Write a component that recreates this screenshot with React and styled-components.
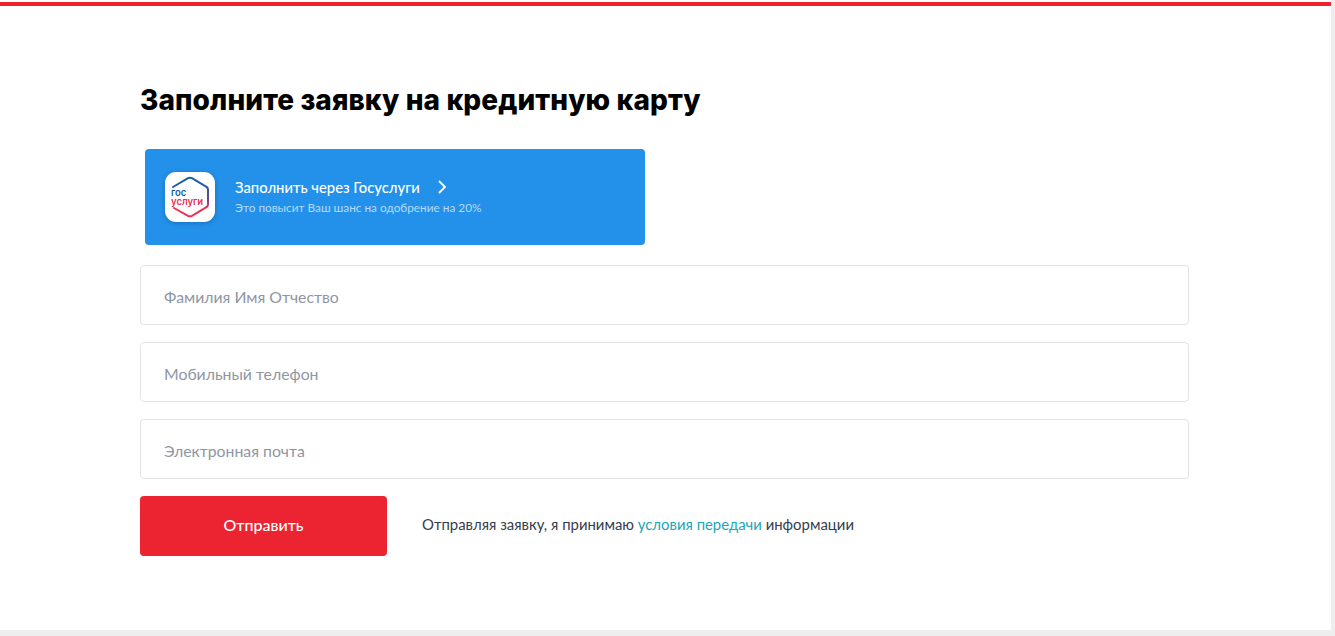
import React from "react";
import styled, { createGlobalStyle } from "styled-components";

const Global = createGlobalStyle`
  html, body { margin: 0; padding: 0; background: #eeeeee; }
  body { font-family: "Lato", "Noto Sans", sans-serif; overflow: hidden; }
`;

const Page = styled.div`
  width: 1331px;
  height: 630px;
  box-sizing: border-box;
  padding-top: 2px;
  background: #fff;
`;
const TopBar = styled.div`
  height: 4px;
  background: #ec2330;
`;
const Content = styled.main`
  padding: 76px 142px 0 140px;
`;
const Title = styled.h1`
  margin: 0;
  font-family: "Inter", sans-serif;
  font-size: 28px;
  line-height: 36px;
  font-weight: 800;
  letter-spacing: 0.1px;
  color: #000;
`;
const GosButton = styled.a`
  display: flex;
  align-items: center;
  gap: 20px;
  width: 500px;
  height: 96px;
  box-sizing: border-box;
  margin: 31px 0 20px 5px;
  padding: 0 20px;
  border-radius: 4px;
  background: #2391ea;
`;
const GosIcon = styled.div`
  width: 50px;
  height: 50px;
  flex: none;
  border-radius: 11px;
  background: #fff;
  box-shadow: 0 1px 5px rgba(0, 50, 110, 0.35);
  overflow: hidden;
`;
const GosText = styled.div`
  display: flex;
  flex-direction: column;
  gap: 4px;
  padding-bottom: 1px;
`;
const GosTitleRow = styled.div`
  display: flex;
  align-items: center;
  gap: 17px;
  font-size: 14.8px;
  line-height: 18px;
  font-weight: 500;
  color: #fff;
`;
const GosHint = styled.div`
  font-size: 11.8px;
  line-height: 15px;
  color: #b5dbf9;
`;
const Fields = styled.div`
  display: flex;
  flex-direction: column;
  gap: 17px;
`;
const Field = styled.input`
  display: block;
  width: 100%;
  height: 60px;
  box-sizing: border-box;
  padding: 2px 23px 0;
  border: 1px solid #e2e4e8;
  border-radius: 4px;
  background: #fff;
  font-family: inherit;
  font-size: 15.8px;
  outline: none;
  &::placeholder {
    color: #8f96a3;
    opacity: 1;
  }
`;
const Footer = styled.div`
  display: flex;
  align-items: center;
  gap: 35px;
  margin-top: 17px;
`;
const Submit = styled.button`
  width: 247px;
  height: 60px;
  padding: 0 0 3px;
  border: 0;
  border-radius: 4px;
  background: #ec2330;
  color: #fff;
  font-family: inherit;
  font-size: 16px;
  font-weight: 500;
`;
const Terms = styled.p`
  margin: 0 0 4px;
  font-size: 14.9px;
  line-height: 20px;
  color: #353d4d;
`;
const TermsLink = styled.a`
  color: #1ba6b8;
`;

const Chevron = () => (
  <svg width="10" height="14" viewBox="0 0 10 14" fill="none">
    <path d="M2 1l6 6-6 6" stroke="#fff" strokeWidth="1.8" />
  </svg>
);

const GosLogo = () => (
  <svg width="50" height="50" viewBox="0 0 50 50" fill="none">
    <defs>
      <linearGradient id="gosGrad" x1="0" y1="0" x2="0" y2="1">
        <stop offset="0" stopColor="#0d62ad" />
        <stop offset="0.55" stopColor="#5a4a96" />
        <stop offset="0.8" stopColor="#ee2f53" />
        <stop offset="1" stopColor="#ee2f53" />
      </linearGradient>
    </defs>
    <path
      d="M8 15L23 6.2q2-1 4 0l14 8.3q2 1 2 3v15q0 2-2 3l-14 8.3q-2 1-4 0L9 36"
      stroke="url(#gosGrad)"
      strokeWidth="2"
      strokeLinecap="round"
    />
    <text x="6" y="24" fontFamily="Inter, sans-serif" fontWeight="600" fontSize="9.5" fill="#0d62ad">гос</text>
    <text x="6" y="33" fontFamily="Inter, sans-serif" fontWeight="600" fontSize="9.5" fill="#ee2f53">услуги</text>
  </svg>
);

export default function App() {
  return (
    <>
      <Global />
      <Page>
        <TopBar />
        <Content>
          <Title>Заполните заявку на кредитную карту</Title>
          <GosButton>
            <GosIcon><GosLogo /></GosIcon>
            <GosText>
              <GosTitleRow>Заполнить через Госуслуги <Chevron /></GosTitleRow>
              <GosHint>Это повысит Ваш шанс на одобрение на 20%</GosHint>
            </GosText>
          </GosButton>
          <Fields>
            <Field placeholder="Фамилия Имя Отчество" />
            <Field placeholder="Мобильный телефон" />
            <Field placeholder="Электронная почта" />
          </Fields>
          <Footer>
            <Submit>Отправить</Submit>
            <Terms>Отправляя заявку, я принимаю <TermsLink>условия передачи</TermsLink> информации</Terms>
          </Footer>
        </Content>
      </Page>
    </>
  );
}
